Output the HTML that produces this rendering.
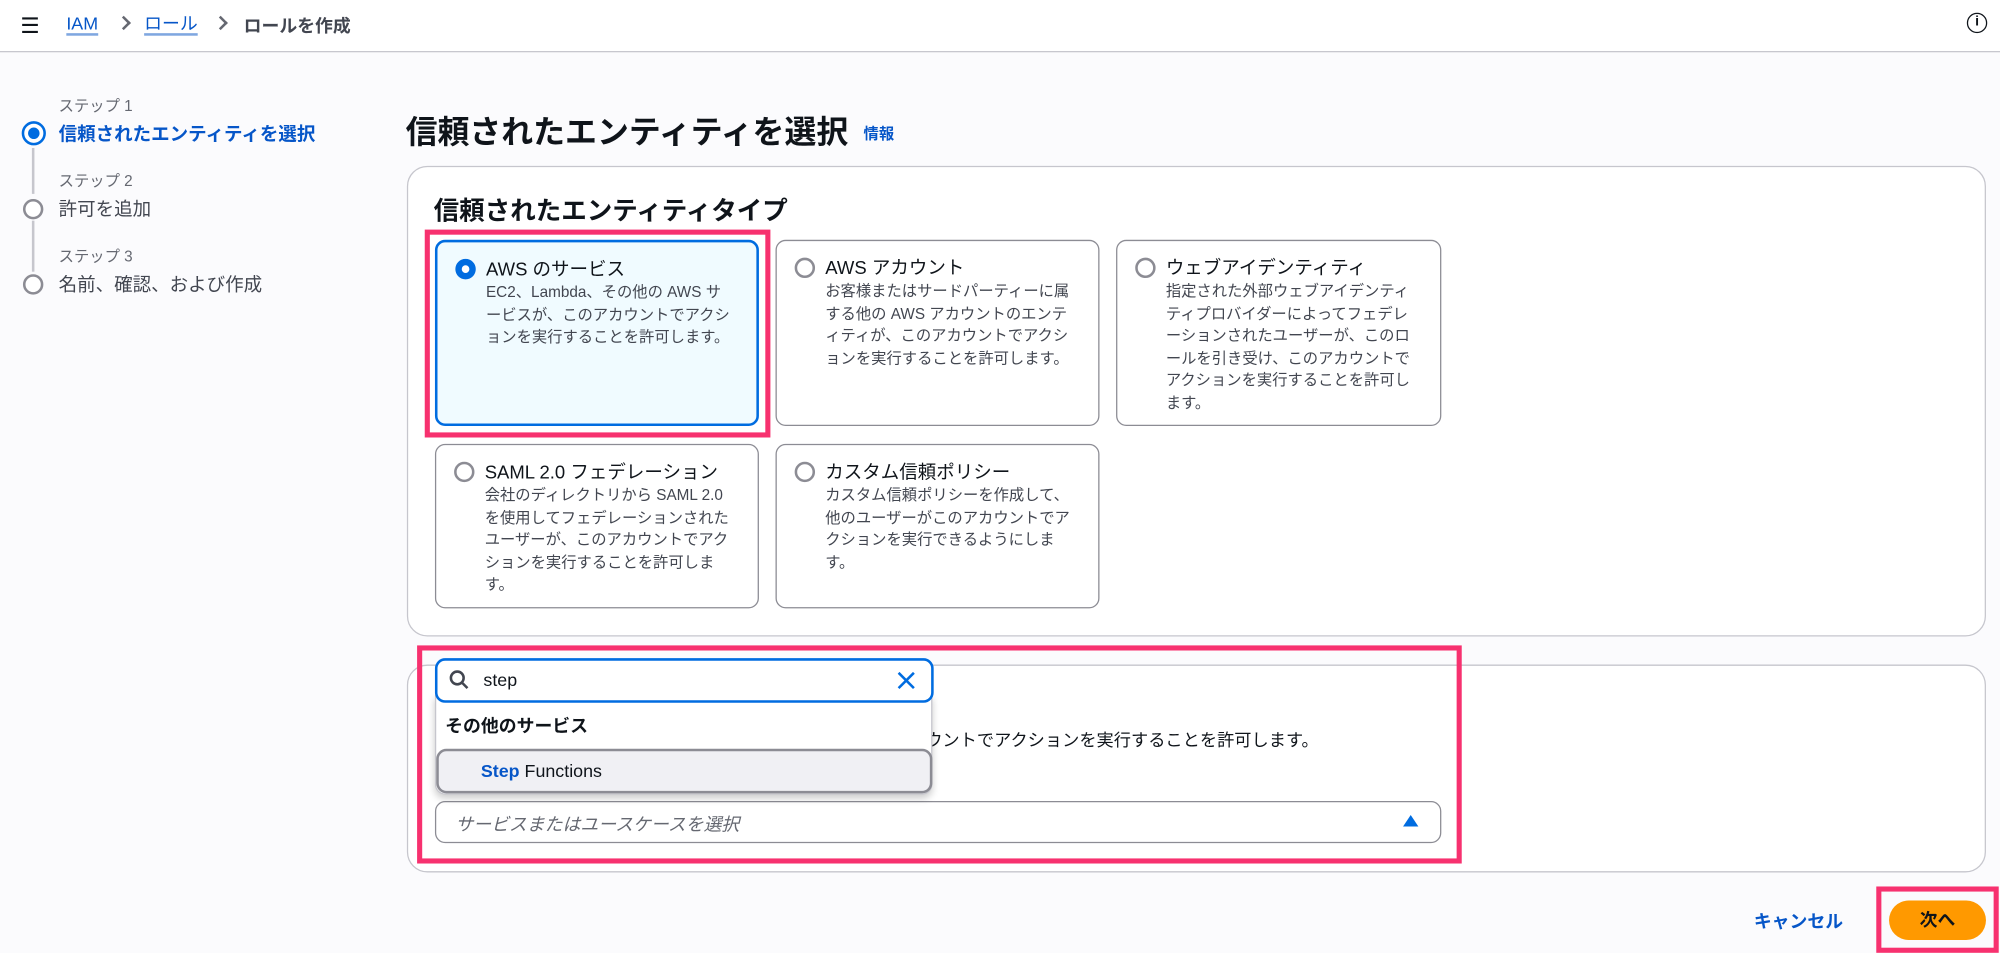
<!DOCTYPE html>
<html><head><meta charset="utf-8"><style>
*{box-sizing:border-box;margin:0;padding:0}
body{width:2000px;height:950px;overflow:hidden;background:#fbfbfd;font-family:"Liberation Sans","Noto Sans CJK JP",sans-serif;color:#0f141a}
#w{position:absolute;left:0;top:0;width:1568px;height:745px;transform:scale(1.27551);transform-origin:0 0}
.a{position:absolute}
.top{left:0;top:0;width:1568px;height:41px;background:#fff;border-bottom:1px solid #c6c6cd}
.bc{font-size:14px;top:10px}
.lk{color:#0656c8;border-bottom:2px solid #7fa7e0;line-height:16px}
.sm{font-size:12px;color:#656871}
.st{font-size:14.5px;color:#424650}
.rad{width:16px;height:16px;border-radius:50%;border:2px solid #8c8c94;background:#fff}
.on{border:5px solid #006ce0}
.card{background:#fff;border:1px solid #c6c6cd;border-radius:16px}
.tile{border:1px solid #8c8c94;border-radius:8px;background:#fff}
.tile .rad{position:absolute;left:14px;top:13px}
.tile b{position:absolute;left:38px;top:10px;font-weight:normal;font-size:14.5px}
.tile p{position:absolute;left:38px;top:31px;font-size:12px;line-height:17.5px;color:#424650;width:196px}
.pk{border:4px solid #f7316f}
.chev{top:12px;width:8px;height:8px;border-top:2px solid #656871;border-right:2px solid #656871;transform:rotate(45deg)}
</style></head><body><div id="w">
<div class="a top"></div>
<div class="a" style="left:16px;top:11px;font-size:17px">☰</div>
<div class="a bc lk" style="left:52px">IAM</div>
<div class="a chev" style="left:93px;top:14px"></div>
<div class="a bc lk" style="left:113px">ロール</div>
<div class="a chev" style="left:169px;top:14px"></div>
<div class="a bc" style="left:191px;color:#424650;font-weight:bold">ロールを作成</div>
<div class="a" style="left:1542px;top:10px;width:16px;height:16px;border:1.5px solid #0f141a;border-radius:50%;font-size:11px;font-weight:bold;text-align:center;line-height:13px">i</div>

<div class="a sm" style="left:46px;top:74px">ステップ 1</div>
<div class="a" style="left:46px;top:94px;font-size:14.5px;color:#0656c8;font-weight:bold">信頼されたエンティティを選択</div>
<div class="a" style="left:17px;top:95px;width:19px;height:19px;border-radius:50%;border:2.5px solid #006ce0;background:#fff"><div style="margin:2.5px;width:9px;height:9px;border-radius:50%;background:#006ce0"></div></div>
<div class="a" style="left:25px;top:116px;width:1.5px;height:36px;background:#c6c6cd"></div>
<div class="a sm" style="left:46px;top:133px">ステップ 2</div>
<div class="a st" style="left:46px;top:153px">許可を追加</div>
<div class="a rad" style="left:18px;top:156px"></div>
<div class="a" style="left:25px;top:173px;width:1.5px;height:40px;background:#c6c6cd"></div>
<div class="a sm" style="left:46px;top:192px">ステップ 3</div>
<div class="a st" style="left:46px;top:212px">名前、確認、および作成</div>
<div class="a rad" style="left:18px;top:215px"></div>

<div class="a" style="left:318px;top:84px;font-size:25px;font-weight:bold">信頼されたエンティティを選択</div>
<div class="a" style="left:677px;top:96px;font-size:12px;font-weight:bold;color:#0656c8">情報</div>

<div class="a card" style="left:319px;top:130px;width:1238px;height:369px"></div>
<div class="a" style="left:340px;top:149px;font-size:20px;font-weight:bold">信頼されたエンティティタイプ</div>
<div class="a tile" style="left:341px;top:188px;width:254px;height:146px;border:2px solid #006ce0;background:#f0fbff"><div class="rad on"></div><b>AWS のサービス</b><p>EC2、Lambda、その他の AWS サービスが、このアカウントでアクションを実行することを許可します。</p></div>
<div class="a tile" style="left:608px;top:188px;width:254px;height:146px"><div class="rad"></div><b>AWS アカウント</b><p>お客様またはサードパーティーに属する他の AWS アカウントのエンティティが、このアカウントでアクションを実行することを許可します。</p></div>
<div class="a tile" style="left:875px;top:188px;width:255px;height:146px"><div class="rad"></div><b>ウェブアイデンティティ</b><p>指定された外部ウェブアイデンティティプロバイダーによってフェデレーションされたユーザーが、このロールを引き受け、このアカウントでアクションを実行することを許可します。</p></div>
<div class="a tile" style="left:341px;top:348px;width:254px;height:129px"><div class="rad"></div><b>SAML 2.0 フェデレーション</b><p>会社のディレクトリから SAML 2.0 を使用してフェデレーションされたユーザーが、このアカウントでアクションを実行することを許可します。</p></div>
<div class="a tile" style="left:608px;top:348px;width:254px;height:129px"><div class="rad"></div><b>カスタム信頼ポリシー</b><p>カスタム信頼ポリシーを作成して、他のユーザーがこのアカウントでアクションを実行できるようにします。</p></div>
<div class="a pk" style="left:333px;top:180px;width:271px;height:163px"></div>

<div class="a card" style="left:319px;top:521px;width:1238px;height:163px"></div>
<div class="a" style="left:352px;top:569px;font-size:13.5px;white-space:nowrap">ユースケースを使用すると、他の AWS のサービスがこのアカウントでアクションを実行することを許可します。</div>
<div class="a" style="left:341px;top:628px;width:789px;height:33px;border:1px solid #8c8c94;border-radius:8px;background:#fff;font-size:14px;font-style:italic;color:#656871;padding:7px 15px">サービスまたはユースケースを選択</div>
<div class="a" style="left:1100px;top:639px;width:0;height:0;border-left:6px solid transparent;border-right:6px solid transparent;border-bottom:9px solid #006ce0"></div>

<div class="a" style="left:341px;top:545px;width:390px;height:78px;background:#fff;border:1px solid #c6c6cd;border-radius:0 0 8px 8px;box-shadow:0 3px 6px rgba(0,0,0,.2)"></div>
<div class="a" style="left:349px;top:559px;font-size:14px;font-weight:bold">その他のサービス</div>
<div class="a" style="left:342px;top:587px;width:389px;height:35px;background:#f0f0f4;border:2px solid #8c8c94;border-radius:8px;font-size:14px;padding:7px 33px"><span style="color:#0656c8;font-weight:bold">Step</span> Functions</div>
<div class="a" style="left:341px;top:516px;width:391px;height:35px;background:#fff;border:2px solid #006ce0;border-radius:8px;font-size:14px;padding:7px 36px">step</div>
<svg class="a" style="left:352px;top:525px" width="16" height="16" viewBox="0 0 16 16"><circle cx="6.5" cy="6.5" r="5" fill="none" stroke="#424650" stroke-width="2"/><path d="M10 10l4.5 4.5" stroke="#424650" stroke-width="2"/></svg>
<svg class="a" style="left:703px;top:526px" width="15" height="15" viewBox="0 0 15 15"><path d="M1.5 1.5l12 12M13.5 1.5l-12 12" stroke="#006ce0" stroke-width="2"/></svg>
<div class="a pk" style="left:327px;top:506px;width:819px;height:171px"></div>

<div class="a" style="left:1375px;top:712px;font-size:14px;font-weight:bold;color:#0656c8">キャンセル</div>
<div class="a" style="left:1481px;top:706px;width:76px;height:31px;border-radius:16px;background:#ff9900;font-size:14px;font-weight:bold;text-align:center;line-height:31px">次へ</div>
<div class="a pk" style="left:1471px;top:695px;width:96px;height:52px"></div>
</div></body></html>
